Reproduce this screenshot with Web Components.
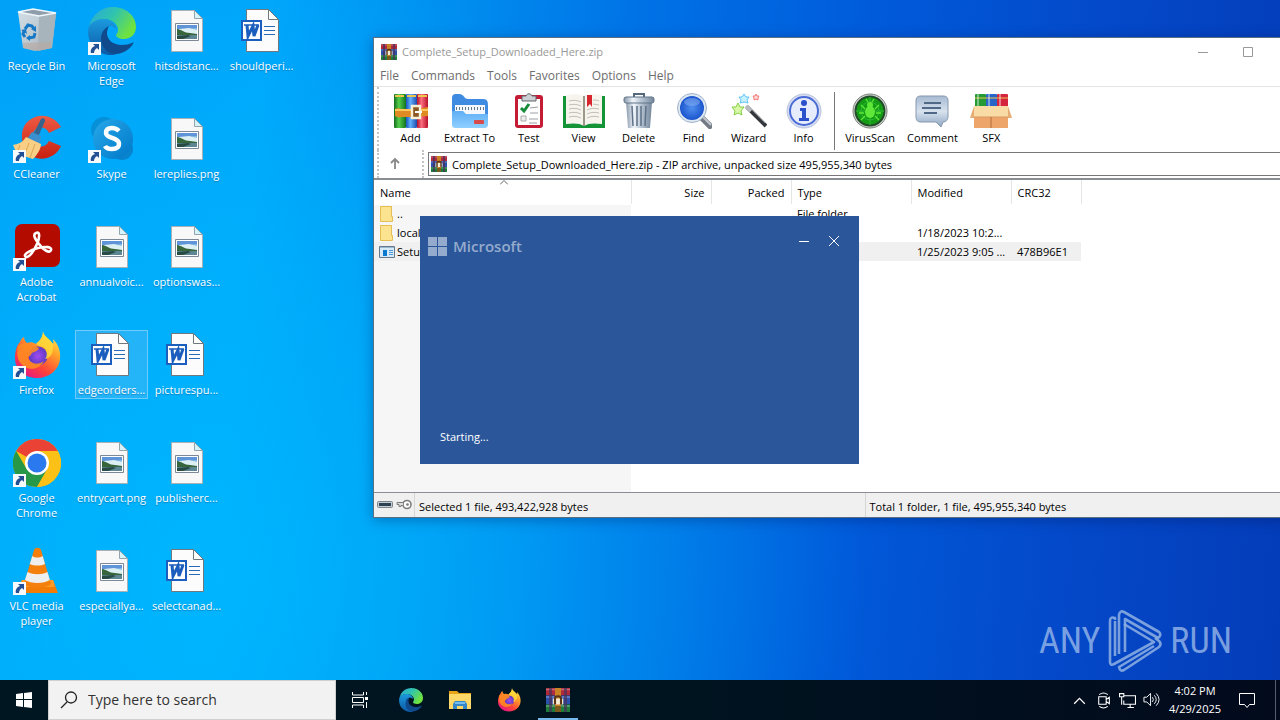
<!DOCTYPE html>
<html lang="en">
<head>
<meta charset="utf-8">
<title>Desktop</title>
<style>
  html, body {
    height: 100%;
    margin: 0;
  }

  body {
    font-family: "Open Sans", "Noto Sans", sans-serif;
    font-size: 11px;
    overflow: hidden;
  }
</style>
</head>
<body>

<desktop-screen>
  <desktop-icon icon="recycle" label="Recycle Bin"></desktop-icon>
  <desktop-icon icon="ccleaner" label="CCleaner" shortcut></desktop-icon>
  <desktop-icon icon="acrobat" label="Adobe Acrobat" shortcut></desktop-icon>
  <desktop-icon icon="firefox" label="Firefox" shortcut></desktop-icon>
  <desktop-icon icon="chrome" label="Google Chrome" shortcut></desktop-icon>
  <desktop-icon icon="vlc" label="VLC media player" shortcut></desktop-icon>
  <desktop-icon icon="edge" label="Microsoft Edge" shortcut></desktop-icon>
  <desktop-icon icon="skype" label="Skype" shortcut></desktop-icon>
  <desktop-icon icon="picture" label="annualvoic..."></desktop-icon>
  <desktop-icon icon="word" label="edgeorders..." selected></desktop-icon>
  <desktop-icon icon="picture" label="entrycart.png"></desktop-icon>
  <desktop-icon icon="picture" label="especiallya..."></desktop-icon>
  <desktop-icon icon="picture" label="hitsdistanc..."></desktop-icon>
  <desktop-icon icon="picture" label="lereplies.png"></desktop-icon>
  <desktop-icon icon="picture" label="optionswas..."></desktop-icon>
  <desktop-icon icon="word" label="picturespu..."></desktop-icon>
  <desktop-icon icon="picture" label="publisherc..."></desktop-icon>
  <desktop-icon icon="word" label="selectcanad..."></desktop-icon>
  <desktop-icon icon="word" label="shouldperi..."></desktop-icon>

  <any-run-mark slot="over"></any-run-mark>

  <archive-window slot="over">
    <span slot="title">Complete_Setup_Downloaded_Here.zip</span>
    <tool-button slot="tools" icon="books">Add</tool-button>
    <tool-button slot="tools" icon="extract">Extract To</tool-button>
    <tool-button slot="tools" icon="test">Test</tool-button>
    <tool-button slot="tools" icon="view">View</tool-button>
    <tool-button slot="tools" icon="trash">Delete</tool-button>
    <tool-button slot="tools" icon="find">Find</tool-button>
    <tool-button slot="tools" icon="wizard">Wizard</tool-button>
    <tool-button slot="tools" icon="info">Info</tool-button>
    <tool-button slot="tools" icon="virus" divided>VirusScan</tool-button>
    <tool-button slot="tools" icon="comment">Comment</tool-button>
    <tool-button slot="tools" icon="sfx">SFX</tool-button>
    <archive-list></archive-list>
    <span slot="selected">Selected 1 file, 493,422,928 bytes</span>
    <span slot="total">Total 1 folder, 1 file, 495,955,340 bytes</span>
  </archive-window>

  <splash-window slot="over">Starting...</splash-window>

  <task-bar slot="bar">
    <task-button icon="taskview" label="Task View"></task-button>
    <task-button icon="edge" label="Microsoft Edge"></task-button>
    <task-button icon="explorer" label="File Explorer"></task-button>
    <task-button icon="firefox" label="Firefox"></task-button>
    <task-button icon="rar" label="WinRAR" active></task-button>
    <span slot="time">4:02 PM</span>
    <span slot="date">4/29/2025</span>
  </task-bar>
</desktop-screen>

<script>
const icons = {
  recycle: `<svg viewBox="0 0 48 48">
    <defs><linearGradient id="a" x1="0" y1="0" x2="1" y2="1"><stop offset="0" stop-color="#d4dfe6"/><stop offset=".55" stop-color="#bcc8d0"/><stop offset="1" stop-color="#99a7b2"/></linearGradient></defs>
    <path d="M5 5 20 2 43 6 39 41 22 44 10 41z" fill="url(#a)"/>
    <path d="M26 9 43 6 39 41 25 44z" fill="#a8b4bc"/>
    <path d="M10 41 10 36 38 35 38 41 25 44z" fill="#b9a9a0" opacity=".6"/>
    <path d="M5 5 20 2 43 6 26 9z" fill="#8f9eaa" stroke="#eef7fb" stroke-width="1.6"/>
    <path d="M12 22 15 18 19 19 21 22M22 26 21 30 16 31M12 30 10 27 11 24" fill="none" stroke="#1779c6" stroke-width="3"/>
    <path d="M23 19v6l-5-3zM17 28v6l-4-3zM8 23l5-1 1 5z" fill="#1779c6"/>
  </svg>`,
  edge: `<svg viewBox="0 0 48 48">
    <defs>
      <linearGradient id="a" x1="0" y1="0" x2="1" y2=".5"><stop offset="0" stop-color="#2aa8dc"/><stop offset=".5" stop-color="#2fc3b0"/><stop offset="1" stop-color="#70e23e"/></linearGradient>
      <linearGradient id="b" x1="0" y1="0" x2="0" y2="1"><stop offset="0" stop-color="#1c9ade"/><stop offset="1" stop-color="#0c59a4"/></linearGradient>
    </defs>
    <path d="M1 21C3 8 13 0 25 0c13 0 23 9 23 20 0 7-5 12-12 12-5 0-8-2-8-4 0-1 2-2 2-5 0-6-6-11-14-11C8 12 3 16 1 21z" fill="url(#a)"/>
    <path d="M16 12C8 12 2 16 .5 21-2 36 9 48 23 48c2 0 4 0 5-1-8-2-14-9-14-17 0-6 3-10 7-11 4 0 8 2 8 5-1-7-6-12-13-12z" fill="url(#b)"/>
    <path d="M21 19c-5 2-8 7-8 13 0 9 8 16 16 15 7-1 13-5 16-10 1-1 0-2-1-1-3 1-6 2-10 2-9 0-15-5-15-12 0-3 1-5 2-7z" fill="#104a8c"/>
  </svg>`,
  picture: `<svg viewBox="0 0 48 48">
    <path d="M8.500 3.500h23l8 8v33h-31z" fill="#f8f8f8" stroke="#a9b0b6"/>
    <path d="M31.500 3.500v8h8z" fill="#d6f2fb" stroke="#94a4ad"/>
    <path d="M12.500 16.500h23v17h-23z" fill="#fff" stroke="#7c8895"/>
    <path d="M14 18h20v14H14z" fill="#8cbfe8"/>
    <path d="M14 18h20v3l-20 2z" fill="#5f95d8"/>
    <path d="M16 22l10-1 8 2v4H14v-3z" fill="#dceff3"/>
    <path d="M14 22c4 0 7 4 13 4l7 1v2H14z" fill="#37663c"/>
    <path d="M14 28h20v4H14z" fill="#5e8794"/>
    <path d="M14 29l11-1 3 1-8 3h-6z" fill="#284b46"/>
  </svg>`,
  word: `<svg viewBox="0 0 48 48">
    <path d="M8.500 2.500h22l10 10v32h-32z" fill="#fcfcfc" stroke="#70787f"/>
    <path d="M30.500 2.500v10h10z" fill="#fff" stroke="#70787f"/>
    <path d="M26 19.500h11M26 23.500h11M26 27.500h11" stroke="#2b6cb8"/>
    <path d="M3 13h21v21H3z" fill="#1b5ebe"/>
    <path d="M5 15h17v17H5z" fill="#fff"/>
    <path d="M6 18h6M12 18h5M17 18h4" stroke="#1b5ebe" stroke-width="1.500"/>
    <path d="M9 18l1 11 5-10 1 10 4-11" fill="none" stroke="#1b5ebe" stroke-width="3"/>
  </svg>`,
  ccleaner: `<svg viewBox="0 0 48 48">
    <defs><linearGradient id="a" x1="0" y1="0" x2="0" y2="1"><stop offset="0" stop-color="#ee5a43"/><stop offset="1" stop-color="#c82010"/></linearGradient></defs>
    <path d="M48 12C42 2 30-2 20 3 10 8 7 18 10 29c3 11 14 17 24 14 7-2 12-7 14-12l-12-5c-4 8-14 7-16-1-2-8 4-15 11-12 3 1 4 3 5 5z" fill="url(#a)"/>
    <path d="M28 4c2-2 5 0 4 2L25 22l-5-2z" fill="#35648f"/>
    <path d="M19 17l9 4-1 8-13-5z" fill="#3b91cf"/>
    <path d="M13 22c-4 6-8 7-13 8l4 9 16 5c4-4 8-10 8-15z" fill="#f8cf84"/>
    <path d="M7 30l-3 8M16 28l-5 13M22 29l-5 14" stroke="#dca854" fill="none"/>
  </svg>`,
  skype: `<svg viewBox="0 0 48 48">
    <defs><linearGradient id="a" x1="0" y1="0" x2="1" y2="1"><stop offset="0" stop-color="#28a8ea"/><stop offset="1" stop-color="#0078c8"/></linearGradient></defs>
    <circle cx="16" cy="15" r="13" fill="#0590d8"/><circle cx="34" cy="34" r="11" fill="#0784cd"/>
    <circle cx="25" cy="24" r="20" fill="url(#a)"/>
    <path d="M31 16c-2-2-4-3-7-3-4 0-6 2-6 5 0 6 13 4 13 11 0 4-3 5-7 5-3 0-6-1-7-3" fill="none" stroke="#fff" stroke-width="4.500"/>
  </svg>`,
  acrobat: `<svg viewBox="0 0 48 48">
    <rect x="2" y="1" width="45" height="43" rx="7" fill="#b30b00"/>
    <path d="M23 10c4-2 4 4 1 11-3 7-8 14-11 13-4-2 4-7 12-9 8-2 14-1 13 2-1 4-8 0-12-6-5-6-6-10-3-11z" fill="none" stroke="#fff" stroke-width="2.600"/>
  </svg>`,
  firefox: `<svg viewBox="0 0 48 48">
    <defs>
      <linearGradient id="a" x1=".9" y1="0" x2=".25" y2="1"><stop offset="0" stop-color="#fff44f"/><stop offset=".35" stop-color="#ffa32a"/><stop offset=".7" stop-color="#ff4438"/><stop offset="1" stop-color="#e31587"/></linearGradient>
      <radialGradient id="b"><stop offset="0" stop-color="#a24cf0"/><stop offset="1" stop-color="#5b3ac2"/></radialGradient>
    </defs>
    <path d="M30 0c0 5 7 8 10 13 1-2 0-3 0-5 5 5 8 12 7 20-1 11-11 19-23 19C11 47 2 38 2 27 2 20 4 14 7 11c0-1 2-4 4-5 0 3 2 5 3 6 3-1 6-1 9 1 3-3 7-6 7-13z" fill="url(#a)"/>
    <circle cx="25" cy="25" r="9.500" fill="url(#b)"/>
    <path d="M5 15c6-5 11-3 14 0 3 1 6 1 7 2-1 3-5 4-7 5-1 2-2 3-4 4 1 6 9 9 16 4-3 7-12 10-19 6-7-4-9-12-7-21z" fill="#ff8b22" opacity=".9"/>
    <path d="M30 0c0 5 7 8 10 13 1 8-2 14-8 15 3-4 2-9-2-12-2-1-5-1-7-3 3-3 7-6 7-13z" fill="#ffdc3a" opacity=".8"/>
  </svg>`,
  chrome: `<svg viewBox="0 0 48 48">
    <circle cx="24" cy="24" r="24" fill="#fbc116"/>
    <path d="M3.200 12A24 24 0 0 1 44.800 12H24L13.600 18z" fill="#ea4335"/>
    <path d="M3.200 12A24 24 0 0 0 24 48l10.400-18-20.800-.1z" fill="#279847"/>
    <path d="M44.800 12H24l10.400 18L24 48A24 24 0 0 0 44.800 12z" fill="#fbc116"/>
    <circle cx="24" cy="24" r="12" fill="#fff"/><circle cx="24" cy="24" r="9.500" fill="#2a79ee"/>
  </svg>`,
  vlc: `<svg viewBox="0 0 48 48">
    <path d="M9 33h31l5 13H2z" fill="#f27c05"/><path d="M9 33h31l2 7H7z" fill="#ff9b26"/>
    <path d="M21 3c1-3 6-3 7 0l10 34c-6 5-21 5-27 0z" fill="#f57f0c"/>
    <path d="M19.300 9c3 2 7 2 10.400 0l2.300 8c-4 2-11 2-15.200 0zM14.500 25c6 3 14 3 20 0l2.400 8c-6 4-19 4-25 0z" fill="#eee"/>
  </svg>`,
  shortcut: `<svg viewBox="0 0 13 13"><path d="M0 0h13v13H0z" fill="#f6fafd"/><path d="M5 2h6v6L9 6c-2 1-3 3-3 5H3c-1-3 1-6 4-7z" fill="#234f94"/></svg>`,
  rar: `<svg viewBox="0 0 16 16">
    <path d="M0 0h16v5H0z" fill="#b12a3c"/><path d="M0 5h16v6H0z" fill="#2c51ac"/><path d="M0 11h16v5H0z" fill="#1d7c3a"/>
    <path d="M0 1h16M0 6h16M0 12h16" stroke="#fff" stroke-opacity=".3"/>
    <path d="M2 0h2v16H2zM12 0h2v16h-2z" fill="#49315a" opacity=".7"/>
    <path d="M6 0h4v16H6z" fill="#c98224"/><path d="M6 12h4v4H6z" fill="#7b5a1e"/>
    <path d="M4.500 7h7v4h-7z" fill="#f5ecd2"/><path d="M6 11V7c0-2 4-2 4 0v4" fill="none" stroke="#5a3218" stroke-width="1.400"/>
  </svg>`,
  books: `<svg viewBox="0 0 36 36">
    <defs>
      <linearGradient id="a"><stop offset="0" stop-color="#126a1d"/><stop offset=".4" stop-color="#55cf4d"/><stop offset="1" stop-color="#14731f"/></linearGradient>
      <linearGradient id="b"><stop offset="0" stop-color="#1a53bd"/><stop offset=".4" stop-color="#62b0fb"/><stop offset="1" stop-color="#1c4cae"/></linearGradient>
      <linearGradient id="c"><stop offset="0" stop-color="#b1122c"/><stop offset=".4" stop-color="#fa6f7e"/><stop offset="1" stop-color="#b8102a"/></linearGradient>
    </defs>
    <rect x="1" y="1" width="12" height="34" rx="1" fill="url(#a)"/><rect x="13" y="1" width="11" height="34" rx="1" fill="url(#b)"/><rect x="24" y="1" width="11" height="34" rx="1" fill="url(#c)"/>
    <path d="M2 3h9M14 3h9M25 3h9" stroke="#edc64e" stroke-width="2"/>
    <path d="M2 16c2-1 4-1 7 0h15l11-2v9l-11 1H9c-3 1-5 0-7-1z" fill="#df8a22"/><path d="M2 17h33" stroke="#ffc75b" stroke-width="2"/>
    <path d="M19 13h8v12h-8z" fill="#8b5723" stroke="#f9f0d5" stroke-width="2.400"/><path d="M22 19h7" stroke="#fff" stroke-width="2"/>
  </svg>`,
  extract: `<svg viewBox="0 0 38 36">
    <defs><linearGradient id="a" x1="0" y1="0" x2="0" y2="1"><stop offset="0" stop-color="#5faef5"/><stop offset="1" stop-color="#8fd0ff"/></linearGradient></defs>
    <path d="M1 6c0-6 3-5 7-5 5 0 5 5 9 5h15c5 0 5 3 5 8v14H1z" fill="#3f8be2"/>
    <path d="M4 12h30v10H4z" fill="#f4f8fc"/><path d="M5 15.500h28" stroke="#61788c" stroke-width="3" stroke-dasharray="1 2"/>
    <path d="M1 18h11l3 3h22v10c0 3-1 4-4 4H5c-3 0-4-1-4-4z" fill="url(#a)"/>
    <rect x="23" y="27" width="10" height="4" rx="1" fill="#d94b4b"/>
  </svg>`,
  test: `<svg viewBox="0 0 36 36">
    <rect x="4" y="2" width="28" height="33" rx="3" fill="#c31c34"/><path d="M7 6h22v26H7z" fill="#fff"/>
    <path d="M11 3h4c1-3 5-3 6 0h4v5H11z" fill="#ccd0d4" stroke="#62656a"/>
    <path d="M19 15l8-1M19 20h8M18 26h9M18 30h8" stroke="#9a9ea3"/><path d="M10 23h5v5h-5z" fill="#eee" stroke="#aaa"/>
    <path d="M10 15l3 3 5-7" fill="none" stroke="#178c3b" stroke-width="3"/>
  </svg>`,
  view: `<svg viewBox="0 0 42 36">
    <path d="M0 3h42v32H0z" fill="#149337"/>
    <path d="M3 2c7-1 14-1 18 1 4-2 11-2 18-1v29c-7-1-14-1-18 2-4-3-11-3-18-2z" fill="#f6f4ec"/>
    <path d="M21 3v30" stroke="#7d786b" stroke-width="1.500"/>
    <path d="M6 8c4-1 8-1 12 1M6 12c4-1 8-1 12 1M6 16c4-1 8-1 12 1M6 20c4-1 8-1 12 1M6 24c4-1 8-1 12 1M36 8c-2-1-4-1-6-1M36 12l-6-1M36 16c-4-1-8-1-12 1M36 20c-4-1-8-1-12 1M36 24c-4-1-8-1-12 1" fill="none" stroke="#c0bfb8"/>
    <path d="M24 2h5v12l-2-3-3 3z" fill="#d8252d"/>
  </svg>`,
  trash: `<svg viewBox="0 0 36 36">
    <defs><linearGradient id="a"><stop offset="0" stop-color="#8797aa"/><stop offset=".3" stop-color="#f0f5fa"/><stop offset=".6" stop-color="#b3c1d0"/><stop offset="1" stop-color="#75879b"/></linearGradient></defs>
    <path d="M5 9h26l-2 26H7z" fill="url(#a)"/><path d="M11 13l1 20M16 13v20M20 13v20M25 13l-1 20" stroke="#5d7187" stroke-width="1.500"/>
    <path d="M13 4V1h10v3" fill="none" stroke="#55687c" stroke-width="2"/><rect x="3" y="4" width="30" height="6" rx="2" fill="url(#a)" stroke="#61758a"/>
  </svg>`,
  find: `<svg viewBox="0 0 36 36">
    <defs><radialGradient id="a"><stop offset="0" stop-color="#4f8fee"/><stop offset="1" stop-color="#1c55cd"/></radialGradient></defs>
    <path d="M24 23l12 12" stroke="#747b85" stroke-width="6"/><path d="M25 22l10 10" stroke="#c3c8cf" stroke-width="2"/>
    <circle cx="16" cy="15" r="14.500" fill="#dfe9f4" stroke="#9fb2c8"/><circle cx="16" cy="15" r="12" fill="url(#a)"/>
    <ellipse cx="16" cy="9" rx="8" ry="4" fill="#a3c6f9" opacity=".4"/>
  </svg>`,
  wizard: `<svg viewBox="0 0 36 36">
    <path d="M16 14l19 19" stroke="#34383d" stroke-width="4"/><path d="M15 13l5 5" stroke="#b7bbc0" stroke-width="4"/><path d="M21 17l13 13" stroke="#83888e"/>
    <path d="M13 1l2 3 3 0-2 3 1 3-4-1-4 1 1-3-2-3 3 0z" fill="#c6f1ff" stroke="#63c4f2"/>
    <path d="M25 1l1 2 2 0-1 2 0 2-2-1-2 1 0-2-1-2 2 0z" fill="#ffd6d6" stroke="#ef7c7c"/>
    <path d="M7 10l2 4 4 0-3 4 1 4-4-2-4 2 1-4-3-4 4 0z" fill="#d9f7a5" stroke="#84cf45"/>
  </svg>`,
  info: `<svg viewBox="0 0 36 36">
    <circle cx="18" cy="18" r="17" fill="#d5dcf0" stroke="#b9c4de"/><circle cx="18" cy="18" r="14" fill="#e6ecfb" stroke="#4a6bd6" stroke-width="2"/>
    <circle cx="18" cy="10" r="3" fill="#2a50cc"/><path d="M14 15h6v10h3v3H13v-3h3v-7h-2z" fill="#2a50cc"/>
  </svg>`,
  virus: `<svg viewBox="0 0 36 36">
    <circle cx="18" cy="18" r="17" fill="#d4d8d4" stroke="#777f78"/><circle cx="18" cy="18" r="14.500" fill="#149c15" stroke="#23492a" stroke-width="2"/>
    <circle cx="18" cy="18" r="9" fill="none" stroke="#2fb832"/><path d="M18 4v28M4 18h28" stroke="#2fb832"/>
    <ellipse cx="18" cy="19" rx="5" ry="6" fill="#5fe83a"/><circle cx="18" cy="12" r="3" fill="#5fe83a"/>
    <path d="M13 16l-4-4M12 20H7M13 23l-4 4M23 16l4-4M24 20h5M23 23l4 4M16 9l-2-3M20 9l2-3" stroke="#5fe83a" stroke-width="1.300"/>
  </svg>`,
  comment: `<svg viewBox="0 0 36 36">
    <defs><linearGradient id="a" x1="0" y1="0" x2="0" y2="1"><stop offset="0" stop-color="#a6bad1"/><stop offset=".5" stop-color="#d7e2ee"/><stop offset="1" stop-color="#8ea6c3"/></linearGradient></defs>
    <path d="M7 3h22c4 0 5 2 5 5v15c0 4-2 6-5 6l-2 5-5-5H7c-4 0-5-2-5-6V8c0-3 1-5 5-5z" fill="url(#a)" stroke="#8698ad"/>
    <path d="M10 10h17M8 15h19M10 20h13" stroke="#506987" stroke-width="2"/>
  </svg>`,
  sfx: `<svg viewBox="0 0 42 36">
    <rect x="5" y="1" width="11" height="14" rx="1" fill="#239a34"/><rect x="16" y="1" width="11" height="14" rx="1" fill="#2964c8"/><rect x="27" y="1" width="11" height="14" rx="1" fill="#d5253c"/>
    <path d="M5 5h11M16 5h11M27 5h11" stroke="#edc352" stroke-width="1"/><path d="M8 1v12M19 1v12M30 1v12" stroke="#fff" stroke-opacity=".4" stroke-width="2"/>
    <path d="M4 13h34v22H4z" fill="#eda56a"/><path d="M4 13h34v11H4z" fill="#f9dba6"/>
    <path d="M4 13L0 25h4zM38 13l4 12h-4z" fill="#e5ad74"/><path d="M4 24h34" stroke="#d99a62"/><path d="M21 24v11" stroke="#b46d3a"/>
  </svg>`,
  folder: `<svg viewBox="0 0 16 16"><path d="M2 0h11v16H2z" fill="#f7da77"/><path d="M1.500.500h11v10h1v5h-12z" fill="#fbe38f" stroke="#e4be52"/></svg>`,
  app: `<svg viewBox="0 0 16 16"><path d="M.5 2.500h15v11H.5z" fill="#d6e9f8" stroke="#66788a"/><path d="M1 3h14v1H1z" fill="#9bb8d2"/><path d="M4 6h4v6H4z" fill="#0b78d0"/><path d="M10 6.500h4M10 8.500h4M10 10.500h4" stroke="#4e9ad9"/></svg>`,
  disk: `<svg viewBox="0 0 16 16"><rect x=".5" y="4.500" width="15" height="6" rx="1" fill="#c4cacf" stroke="#7e868d"/><path d="M2 6h12v3H2z" fill="#2c4252"/></svg>`,
  key: `<svg viewBox="0 0 16 16"><circle cx="11" cy="7.500" r="4" fill="#fff" stroke="#7c7c7c" stroke-width="1.600"/><circle cx="11.500" cy="7.500" r="1.300" fill="#777"/><path d="M7 5.500H1v2h2v2h2v-1h2" fill="#ddd" stroke="#7c7c7c"/></svg>`,
  up: `<svg width="16" viewBox="0 0 16 16" fill="none" stroke="#888" stroke-width="1.800"><path d="M8 13V3M4 7l4-4 4 4"/></svg>`,
  min: `<svg viewBox="0 0 10 10" fill="none" stroke="currentColor"><path d="M0 5.500h10"/></svg>`,
  max: `<svg viewBox="0 0 10 10" fill="none" stroke="currentColor"><path d="M.5.5h9v9h-9z"/></svg>`,
  close: `<svg viewBox="0 0 10 10" fill="none" stroke="currentColor"><path d="M0 0l10 10M10 0L0 10"/></svg>`,
  msflag: `<svg viewBox="0 0 19 19" fill="#95abcd"><path d="M0 0h9v9H0zM10 0h9v9h-9zM0 10h9v9H0zM10 10h9v9h-9z"/></svg>`,
  start: `<svg viewBox="0 0 16 16" fill="#fff"><path d="M0 2l7-1v6H0zM8 1l8-1v7H8zM0 8h7v7l-7-1zM8 8h8v8l-8-1z"/></svg>`,
  search: `<svg viewBox="0 0 18 18" fill="none" stroke="#222" stroke-width="1.300"><circle cx="11" cy="6.500" r="5.500"/><path d="M7 11l-6 6"/></svg>`,
  taskview: `<svg viewBox="0 0 24 24" fill="none" stroke="#fff"><path d="M4.500 4v3h11V4M4.500 20v-3h11v3M4.500 9.500h11v5h-11zM18.500 4v3M18.500 14v6"/><path d="M17 9h3v3h-3z" fill="#fff" stroke="none"/></svg>`,
  explorer: `<svg viewBox="0 0 24 24">
    <path d="M1 3h8l2 2h12v16H1z" fill="#e8a417"/><path d="M1 6h22v15H1z" fill="#ffd868"/>
    <path d="M5 21v-5l2-3h10l2 3v5h-4v-3H9v3z" fill="#3587c8"/><path d="M7 14h10v2H7z" fill="#77bdf0"/>
  </svg>`,
  chevron: `<svg viewBox="0 0 16 16" fill="none" stroke="#fff" stroke-width="1.200"><path d="M3 11l5-5 5 5"/></svg>`,
  camera: `<svg viewBox="0 0 16 16" fill="none" stroke="#fff"><path d="M3.500 4.500h7v7h-7zM10.500 7l3-2v6l-3-2M4 2.500q4-3 8 0M4 13.500q4 3 8 0"/></svg>`,
  network: `<svg viewBox="0 0 16 16" fill="none" stroke="#fff"><path d="M5 3.500h10.500v8H4.500V8M8 14.500h6M10.500 12v2M.5 1.500h4v3h-4zM2.500 5v7"/></svg>`,
  volume: `<svg viewBox="0 0 18 16" fill="none" stroke="#fff"><path d="M1 5.500h3l4-4v13l-4-4H1zM10 5.500q2 2.500 0 5M12 3.500q4 4.500 0 9M14 1.500q6 6.500 0 13"/></svg>`,
  notify: `<svg viewBox="0 0 18 18" fill="none" stroke="#fff"><path d="M1.500 2.500h15v11h-5l-2.500 3-2.500-3h-5z"/></svg>`
};

class DesktopScreen extends HTMLElement {
  constructor() {
    super();
    this.attachShadow({ mode: 'open' }).innerHTML = `
<style>
  :host {
    display: flex;
    flex-direction: column;
    height: 100vh;
    overflow: hidden;
  }

  main {
    flex: 1;
    min-height: 0;
    position: relative;
    background:
      radial-gradient(ellipse 50% 90% at 18% 85%, rgba(0, 188, 255, .7), rgba(0, 188, 255, .45) 45%, transparent),
      linear-gradient(95deg, #00a1f7 0%, #00a6fb 20%, #0090f0 33%, #0072e6 48%, #005bdb 65%, #0448c8 84%, #043cb8 100%);
  }

  .icons {
    display: grid;
    grid-template-rows: repeat(6, 108px);
    grid-auto-flow: column;
    grid-auto-columns: 75px;
    justify-content: start;
  }
</style>
<main>
  <div class="icons"><slot></slot></div>
  <slot name="over"></slot>
</main>
<slot name="bar"></slot>
`;
  }
}

class DesktopIcon extends HTMLElement {
  constructor() {
    super();
    const link = this.hasAttribute('shortcut') ? `<span class="arrow">${icons.shortcut}</span>` : '';
    this.attachShadow({ mode: 'open' }).innerHTML = `
<style>
  :host {
    display: flex;
    flex-direction: column;
    align-items: center;
    padding: 6px 2px 0 0;
    color: #fff;
  }

  button {
    display: flex;
    flex-direction: column;
    align-items: center;
    width: 73px;
    padding: 0 0 1px;
    border: 1px solid transparent;
    background: none;
    font: inherit;
    line-height: 15px;
    color: inherit;
    text-shadow: 0 1px 1px rgba(0, 50, 100, .4);
  }

  :host([selected]) button {
    border-color: rgba(160, 220, 255, .6);
    background: rgba(120, 190, 240, .3);
  }

  .picture {
    position: relative;
    display: block;
    width: 48px;
    height: 48px;
    margin-bottom: 3px;
  }

  svg {
    display: block;
  }

  .arrow {
    position: absolute;
    left: 0;
    bottom: 0;
    width: 13px;
  }
</style>
<button type="button">
  <span class="picture">${icons[this.getAttribute('icon')]}${link}</span>
  <span class="label">${this.getAttribute('label')}</span>
</button>
`;
  }
}

class AnyRunMark extends HTMLElement {
  constructor() {
    super();
    this.attachShadow({ mode: 'open' }).innerHTML = `
<style>
  :host {
    position: absolute;
    right: 48px;
    bottom: 8px;
    display: flex;
    align-items: center;
    gap: 8px;
    font: 36px/62px "Liberation Sans Narrow", "Roboto Condensed", Roboto, sans-serif;
    color: rgba(160, 190, 235, .75);
  }

  svg {
    width: 54px;
    height: 62px;
  }
</style>
<span>ANY</span>
<svg viewBox="0 0 54 62" fill="none" stroke="#8fb0e2" stroke-opacity=".85" stroke-width="2.600" stroke-linejoin="round">
  <path d="M7 10V8Q2 6 2 11V52Q2 56 6 54L46 32L16 14"/>
  <path d="M7 11V46"/>
  <path d="M11 44V5Q12 0 16 2L51 22Q54 25 50 28L17 9V42"/>
  <path d="M47 28L51 31Q54 34 51 37L16 60Q12 62 11 57L46 36"/>
</svg>
<span>RUN</span>
`;
  }
}

class ToolButton extends HTMLElement {
  constructor() {
    super();
    this.attachShadow({ mode: 'open' }).innerHTML = `
<style>
  :host {
    display: block;
  }

  :host([divided]) {
    border-left: 1px solid #777;
    margin-left: 3px;
    padding-left: 4px;
  }

  button {
    display: flex;
    flex-direction: column;
    align-items: center;
    gap: 1px;
    min-width: 55px;
    padding: 1px 6px 4px;
    border: 0;
    background: none;
    font: inherit;
    line-height: 16px;
    color: #000;
    white-space: nowrap;
  }

  svg {
    display: block;
    height: 36px;
  }
</style>
<button type="button">${icons[this.getAttribute('icon')]}<slot></slot></button>
`;
  }
}

class ArchiveWindow extends HTMLElement {
  constructor() {
    super();
    this.attachShadow({ mode: 'open' }).innerHTML = `
<style>
  :host {
    position: absolute;
    left: 373px;
    right: -36px;
    top: 37px;
    display: flex;
    flex-direction: column;
    height: 481px;
    box-sizing: border-box;
    border: 1px solid #5b7083;
    background: #fff;
    box-shadow: 0 2px 12px rgba(0, 20, 80, .35);
  }

  header {
    display: flex;
    align-items: center;
    height: 27px;
    padding-left: 7px;
    color: #999;
  }

  header .title {
    flex: 1;
    margin-left: 5px;
  }

  header button {
    width: 45px;
    height: 27px;
  }

  button {
    padding: 0;
    border: 0;
    background: none;
    font: inherit;
    color: inherit;
  }

  svg {
    display: block;
    margin: auto;
  }

  .small {
    width: 16px;
    height: 16px;
  }

  header button svg {
    width: 10px;
  }

  nav {
    display: flex;
    gap: 12px;
    height: 21px;
    padding-left: 6px;
    border-bottom: 1px solid #e4e4e4;
    font-size: 12px;
    color: #6d6d6d;
  }

  .tools,
  .path {
    display: flex;
    margin-left: 3px;
    border-left: 2px dotted #c4c4c4;
  }

  .tools {
    padding: 5px 0 0 4px;
  }

  .path {
    align-items: center;
    height: 28px;
  }

  .path button {
    width: 32px;
  }

  .address {
    flex: 1;
    display: flex;
    align-items: center;
    height: 22px;
    margin-left: 4px;
    padding-left: 2px;
    border: 1px solid #777;
  }

  .grip {
    height: 28px;
    margin-left: 11px;
    border-left: 2px dotted #c4c4c4;
  }

  input {
    flex: 1;
    margin-left: 5px;
    padding: 0;
    border: 0;
    background: none;
    font: inherit;
    color: #000;
  }

  .list {
    flex: 1;
    border-top: 2px solid #8a8d91;
    border-bottom: 1px solid #8a8d91;
  }

  footer {
    display: flex;
    height: 24px;
    align-items: stretch;
    background: #f0f0f0;
    color: #000;
  }

  footer .locks {
    display: flex;
    align-items: center;
    gap: 3px;
    width: 37px;
    padding-left: 3px;
  }

  footer .locks svg {
    margin: 0;
  }

  footer .cell {
    flex: 1;
    padding-left: 4px;
    border-left: 1px solid #d5d5d5;
    line-height: 28px;
  }
</style>
<header>
  <span class="small">${icons.rar}</span>
  <span class="title"><slot name="title"></slot></span>
  <button type="button" aria-label="Minimize">${icons.min}</button>
  <button type="button" aria-label="Maximize">${icons.max}</button>
  <button type="button" aria-label="Close">${icons.close}</button>
</header>
<nav>
  <button type="button">File</button>
  <button type="button">Commands</button>
  <button type="button">Tools</button>
  <button type="button">Favorites</button>
  <button type="button">Options</button>
  <button type="button">Help</button>
</nav>
<div class="tools"><slot name="tools"></slot></div>
<div class="path">
  <button type="button" aria-label="Up one level">${icons.up}</button>
  <div class="grip"></div>
  <div class="address">
    <span class="small">${icons.rar}</span>
    <input type="text" aria-label="Address" value="Complete_Setup_Downloaded_Here.zip - ZIP archive, unpacked size 495,955,340 bytes">
  </div>
</div>
<div class="list"><slot></slot></div>
<footer>
  <div class="locks"><span class="small">${icons.disk}</span><span class="small">${icons.key}</span></div>
  <div class="cell"><slot name="selected"></slot></div>
  <div class="cell"><slot name="total"></slot></div>
</footer>
`;
  }
}

class ArchiveList extends HTMLElement {
  constructor() {
    super();
    this.attachShadow({ mode: 'open' }).innerHTML = `
<style>
  :host {
    display: block;
    height: 100%;
    background: linear-gradient(#f6f6f6, #f6f6f6) 0 25px / 257px 100% no-repeat;
    color: #000;
  }

  table {
    width: 707px;
    table-layout: fixed;
    border-collapse: collapse;
  }

  th,
  td {
    overflow: hidden;
    padding: 0 6px;
    text-align: left;
    font-weight: normal;
    white-space: nowrap;
  }

  th {
    position: relative;
    height: 24px;
    border-right: 1px solid #e5e5e5;
    background: #fff;
  }

  td {
    height: 19px;
  }

  .number {
    text-align: right;
  }

  .selected td {
    background: #f0f0f0;
  }

  .name {
    display: flex;
    align-items: center;
    gap: 2px;
  }

  td:first-child {
    padding-left: 5px;
  }

  svg {
    width: 16px;
    height: 16px;
  }

  .sort {
    position: absolute;
    left: 49%;
    top: 0;
    width: 8px;
    height: 5px;
  }
</style>
<table>
  <colgroup>
    <col style="width:257px"><col style="width:80px"><col style="width:80px">
    <col style="width:120px"><col style="width:100px"><col style="width:70px">
  </colgroup>
  <thead>
    <tr>
      <th>Name<svg class="sort" viewBox="0 0 8 5" fill="none" stroke="#666"><path d="M0 4.500l4-4 4 4"/></svg></th>
      <th class="number">Size</th>
      <th class="number">Packed</th>
      <th>Type</th>
      <th>Modified</th>
      <th>CRC32</th>
    </tr>
  </thead>
  <tbody>
    <tr><td><span class="name">${icons.folder}..</span></td><td></td><td></td><td>File folder</td><td></td><td></td></tr>
    <tr><td><span class="name">${icons.folder}locales</span></td><td></td><td></td><td></td><td>1/18/2023 10:2...</td><td></td></tr>
    <tr class="selected"><td><span class="name">${icons.app}Setup.exe</span></td><td></td><td></td><td></td><td>1/25/2023 9:05 ...</td><td>478B96E1</td></tr>
  </tbody>
</table>
`;
  }
}

class SplashWindow extends HTMLElement {
  constructor() {
    super();
    this.attachShadow({ mode: 'open' }).innerHTML = `
<style>
  :host {
    position: absolute;
    left: 420px;
    top: 216px;
    display: flex;
    flex-direction: column;
    justify-content: space-between;
    width: 439px;
    height: 248px;
    background: #2b579a;
    color: #fff;
  }

  header {
    display: flex;
    align-items: center;
    padding: 10px 10px 0 8px;
  }

  .flag {
    width: 19px;
    height: 19px;
    margin-top: 10px;
  }

  .brand {
    flex: 1;
    margin: 10px 0 0 6px;
    font: 600 15px/20px "Open Sans", sans-serif;
    color: #95abcd;
  }

  button {
    width: 30px;
    height: 30px;
    padding: 0;
    border: 0;
    background: none;
    color: inherit;
  }

  svg {
    display: block;
    margin: auto;
  }

  button svg {
    width: 10px;
  }

  p {
    margin: 0;
    padding: 0 20px 19px;
    line-height: 16px;
  }
</style>
<header>
  <span class="flag">${icons.msflag}</span>
  <span class="brand">Microsoft</span>
  <button type="button" aria-label="Minimize">${icons.min}</button>
  <button type="button" aria-label="Close">${icons.close}</button>
</header>
<p><slot></slot></p>
`;
  }
}

class TaskButton extends HTMLElement {
  constructor() {
    super();
    this.attachShadow({ mode: 'open' }).innerHTML = `
<style>
  :host {
    display: block;
  }

  button {
    display: block;
    width: 48px;
    height: 40px;
    padding: 0 12px;
    border: 0;
    background: none;
  }

  :host([active]) button {
    box-shadow: inset 0 -2px #76b9ed;
    width: 40px;
    padding: 0 8px;
    margin: 0 4px;
  }

  svg {
    display: block;
    width: 24px;
    height: 24px;
  }
</style>
<button type="button" aria-label="${this.getAttribute('label')}">${icons[this.getAttribute('icon')]}</button>
`;
  }
}

class TaskBar extends HTMLElement {
  constructor() {
    super();
    this.attachShadow({ mode: 'open' }).innerHTML = `
<style>
  :host {
    display: flex;
    align-items: center;
    height: 40px;
    background: linear-gradient(90deg, #001722, #001420 50%, #020a1c);
    color: #fff;
  }

  button {
    display: grid;
    place-items: center;
    height: 40px;
    padding: 0;
    border: 0;
    background: none;
    font: inherit;
    color: inherit;
  }

  .start {
    width: 48px;
  }

  .start svg {
    width: 16px;
  }

  .search {
    display: flex;
    align-items: center;
    box-sizing: border-box;
    width: 288px;
    height: 40px;
    padding-left: 11px;
    border: 1px solid #d0d0d0;
    background: #f2f2f2;
  }

  .search svg {
    width: 18px;
  }

  input {
    flex: 1;
    min-width: 0;
    margin-left: 10px;
    padding: 0;
    border: 0;
    background: none;
    font: 14px/20px "Open Sans", sans-serif;
  }

  input::placeholder {
    color: #333;
    opacity: 1;
  }

  .tasks {
    flex: 1;
    display: flex;
    gap: 1px;
  }

  .tasks ::slotted(task-button:first-of-type) {
    margin-right: 2px;
  }

  .tray {
    width: 24px;
  }

  .tray svg {
    width: 17px;
  }

  .clock {
    display: block;
    width: 64px;
    line-height: 18px;
    text-align: center;
  }

  .clock span {
    display: block;
  }

  .notify {
    width: 40px;
  }

  .notify svg {
    width: 18px;
  }

  .peek {
    width: 5px;
    margin-left: 8px;
    border-left: 1px solid #56606c;
  }
</style>
<button class="start" type="button" aria-label="Start">${icons.start}</button>
<label class="search">${icons.search}<input type="text" aria-label="Search" placeholder="Type here to search"></label>
<div class="tasks"><slot></slot></div>
<button class="tray" type="button" aria-label="Hidden icons">${icons.chevron}</button>
<button class="tray" type="button" aria-label="Camera">${icons.camera}</button>
<button class="tray" type="button" aria-label="Network">${icons.network}</button>
<button class="tray" type="button" aria-label="Volume">${icons.volume}</button>
<button class="clock" type="button"><span><slot name="time"></slot></span><span><slot name="date"></slot></span></button>
<button class="notify" type="button" aria-label="Notifications">${icons.notify}</button>
<button class="peek" type="button" aria-label="Show desktop"></button>
`;
  }
}

customElements.define('desktop-screen', DesktopScreen);
customElements.define('desktop-icon', DesktopIcon);
customElements.define('any-run-mark', AnyRunMark);
customElements.define('tool-button', ToolButton);
customElements.define('archive-window', ArchiveWindow);
customElements.define('archive-list', ArchiveList);
customElements.define('splash-window', SplashWindow);
customElements.define('task-button', TaskButton);
customElements.define('task-bar', TaskBar);
</script>
</body>
</html>
